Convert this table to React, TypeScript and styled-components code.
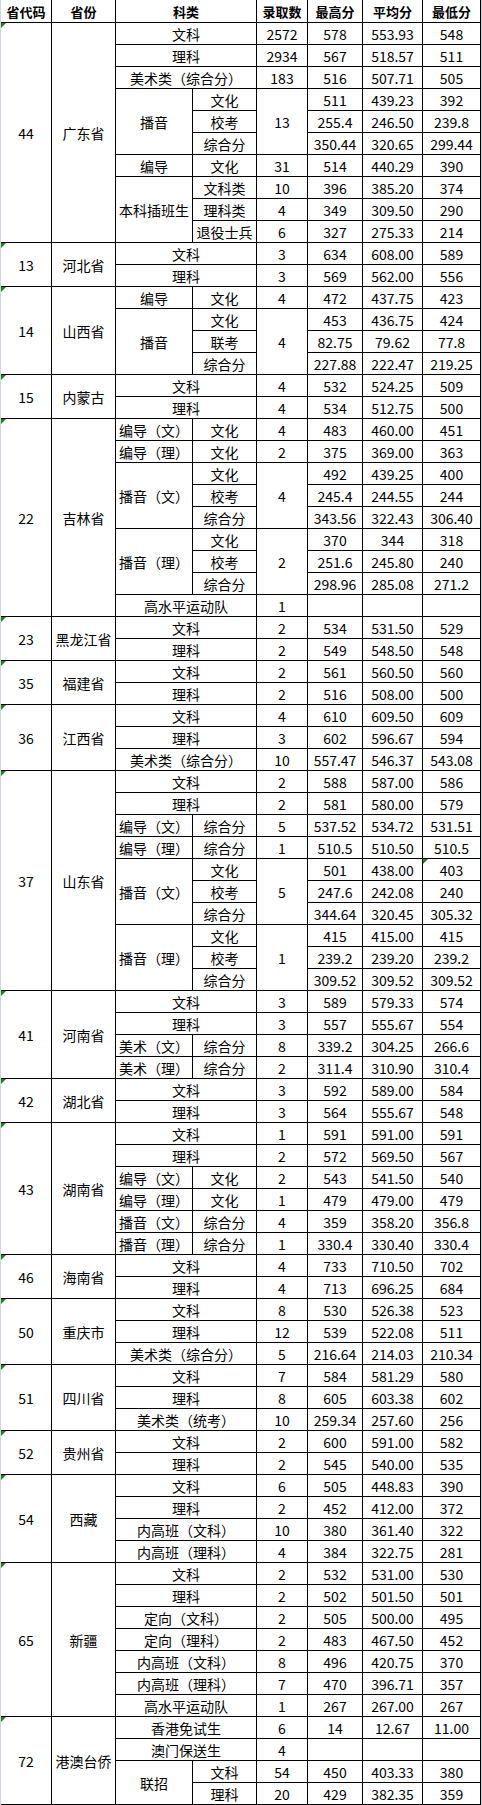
import * as React from 'react';
import styled, { createGlobalStyle } from 'styled-components';

const GlobalStyle = createGlobalStyle`
  html, body {
    margin: 0;
    padding: 0;
    background: #fff;
  }
  body {
    font-family: "Noto Sans CJK SC", "Noto Sans", sans-serif;
    color: #000;
  }
`;

type CellSpec = string | { t: string; cs?: number; rs?: number; flag?: boolean };

interface IProvince {
  code: string;
  name: string;
  rows: CellSpec[][];
}

// helpers for merged cells
const wide = (t: string): CellSpec => ({ t, cs: 2 });
const tall = (t: string, rs: number): CellSpec => ({ t, rs });

const provinces: IProvince[] = [
  {
    code: '44',
    name: '广东省',
    rows: [
      [wide('文科'), '2572', '578', '553.93', '548'],
      [wide('理科'), '2934', '567', '518.57', '511'],
      [wide('美术类（综合分）'), '183', '516', '507.71', '505'],
      [tall('播音', 3), '文化', tall('13', 3), '511', '439.23', '392'],
      ['校考', '255.4', '246.50', '239.8'],
      ['综合分', '350.44', '320.65', '299.44'],
      ['编导', '文化', '31', '514', '440.29', '390'],
      [tall('本科插班生', 3), '文科类', '10', '396', '385.20', '374'],
      ['理科类', '4', '349', '309.50', '290'],
      ['退役士兵', '6', '327', '275.33', '214'],
    ],
  },
  {
    code: '13',
    name: '河北省',
    rows: [
      [wide('文科'), '3', '634', '608.00', '589'],
      [wide('理科'), '3', '569', '562.00', '556'],
    ],
  },
  {
    code: '14',
    name: '山西省',
    rows: [
      ['编导', '文化', '4', '472', '437.75', '423'],
      [tall('播音', 3), '文化', tall('4', 3), '453', '436.75', '424'],
      ['联考', '82.75', '79.62', '77.8'],
      ['综合分', '227.88', '222.47', '219.25'],
    ],
  },
  {
    code: '15',
    name: '内蒙古',
    rows: [
      [wide('文科'), '4', '532', '524.25', '509'],
      [wide('理科'), '4', '534', '512.75', '500'],
    ],
  },
  {
    code: '22',
    name: '吉林省',
    rows: [
      ['编导（文）', '文化', '4', '483', '460.00', '451'],
      ['编导（理）', '文化', '2', '375', '369.00', '363'],
      [tall('播音（文）', 3), '文化', tall('4', 3), '492', '439.25', '400'],
      ['校考', '245.4', '244.55', '244'],
      ['综合分', '343.56', '322.43', '306.40'],
      [tall('播音（理）', 3), '文化', tall('2', 3), '370', '344', '318'],
      ['校考', '251.6', '245.80', '240'],
      ['综合分', '298.96', '285.08', '271.2'],
      [wide('高水平运动队'), '1', '', '', ''],
    ],
  },
  {
    code: '23',
    name: '黑龙江省',
    rows: [
      [wide('文科'), '2', '534', '531.50', '529'],
      [wide('理科'), '2', '549', '548.50', '548'],
    ],
  },
  {
    code: '35',
    name: '福建省',
    rows: [
      [wide('文科'), '2', '561', '560.50', '560'],
      [wide('理科'), '2', '516', '508.00', '500'],
    ],
  },
  {
    code: '36',
    name: '江西省',
    rows: [
      [wide('文科'), '4', '610', '609.50', '609'],
      [wide('理科'), '3', '602', '596.67', '594'],
      [wide('美术类（综合分）'), '10', '557.47', '546.37', '543.08'],
    ],
  },
  {
    code: '37',
    name: '山东省',
    rows: [
      [wide('文科'), '2', '588', '587.00', '586'],
      [wide('理科'), '2', '581', '580.00', '579'],
      ['编导（文）', '综合分', '5', '537.52', '534.72', '531.51'],
      ['编导（理）', '综合分', '1', '510.5', '510.50', '510.5'],
      [tall('播音（文）', 3), '文化', tall('5', 3), '501', '438.00', { t: '403', flag: true }],
      ['校考', '247.6', '242.08', '240'],
      ['综合分', '344.64', '320.45', '305.32'],
      [tall('播音（理）', 3), '文化', tall('1', 3), '415', '415.00', '415'],
      ['校考', '239.2', '239.20', '239.2'],
      ['综合分', '309.52', '309.52', '309.52'],
    ],
  },
  {
    code: '41',
    name: '河南省',
    rows: [
      [wide('文科'), '3', '589', '579.33', '574'],
      [wide('理科'), '3', '557', '555.67', '554'],
      ['美术（文）', '综合分', '8', '339.2', '304.25', '266.6'],
      ['美术（理）', '综合分', '2', '311.4', '310.90', '310.4'],
    ],
  },
  {
    code: '42',
    name: '湖北省',
    rows: [
      [wide('文科'), '3', '592', '589.00', '584'],
      [wide('理科'), '3', '564', '555.67', '548'],
    ],
  },
  {
    code: '43',
    name: '湖南省',
    rows: [
      [wide('文科'), '1', '591', '591.00', '591'],
      [wide('理科'), '2', '572', '569.50', '567'],
      ['编导（文）', '文化', '2', '543', '541.50', '540'],
      ['编导（理）', '文化', '1', '479', '479.00', '479'],
      ['播音（文）', '综合分', '4', '359', '358.20', '356.8'],
      ['播音（理）', '综合分', '1', '330.4', '330.40', '330.4'],
    ],
  },
  {
    code: '46',
    name: '海南省',
    rows: [
      [wide('文科'), '4', '733', '710.50', '702'],
      [wide('理科'), '4', '713', '696.25', '684'],
    ],
  },
  {
    code: '50',
    name: '重庆市',
    rows: [
      [wide('文科'), '8', '530', '526.38', '523'],
      [wide('理科'), '12', '539', '522.08', '511'],
      [wide('美术类（综合分）'), '5', '216.64', '214.03', '210.34'],
    ],
  },
  {
    code: '51',
    name: '四川省',
    rows: [
      [wide('文科'), '7', '584', '581.29', '580'],
      [wide('理科'), '8', '605', '603.38', '602'],
      [wide('美术类（统考）'), '10', '259.34', '257.60', '256'],
    ],
  },
  {
    code: '52',
    name: '贵州省',
    rows: [
      [wide('文科'), '2', '600', '591.00', '582'],
      [wide('理科'), '2', '545', '540.00', '535'],
    ],
  },
  {
    code: '54',
    name: '西藏',
    rows: [
      [wide('文科'), '6', '505', '448.83', '390'],
      [wide('理科'), '2', '452', '412.00', '372'],
      [wide('内高班（文科）'), '10', '380', '361.40', '322'],
      [wide('内高班（理科）'), '4', '384', '322.75', '281'],
    ],
  },
  {
    code: '65',
    name: '新疆',
    rows: [
      [wide('文科'), '2', '532', '531.00', '530'],
      [wide('理科'), '2', '502', '501.50', '501'],
      [wide('定向（文科）'), '2', '505', '500.00', '495'],
      [wide('定向（理科）'), '2', '483', '467.50', '452'],
      [wide('内高班（文科）'), '8', '496', '420.75', '370'],
      [wide('内高班（理科）'), '7', '470', '396.71', '357'],
      [wide('高水平运动队'), '1', '267', '267.00', '267'],
    ],
  },
  {
    code: '72',
    name: '港澳台侨',
    rows: [
      [wide('香港免试生'), '6', '14', '12.67', '11.00'],
      [wide('澳门保送生'), '4', '', '', ''],
      [tall('联招', 2), '文科', '54', '450', '403.33', '380'],
      ['理科', '20', '429', '382.35', '359'],
    ],
  },
];

const headers: CellSpec[] = ['省代码', '省份', wide('科类'), '录取数', '最高分', '平均分', '最低分'];

const Sheet = styled.div`
  display: grid;
  grid-template-columns: 50px 63px 76px 63px 50px 54px 59px 57px;
  grid-template-rows: 22px;
  grid-auto-rows: 21px;
  gap: 1px;
  width: fit-content;
  background: #000;
  border-left: 1px solid #cdd5e1;
  border-right: 1px solid #cdd5e1;
  padding: 0 1px 1px 0;
`;

const Cell = styled.div<{ $cs: number; $rs: number; $head?: boolean; $flag?: boolean }>`
  position: relative;
  grid-column: span ${(p) => p.$cs};
  grid-row: span ${(p) => p.$rs};
  display: flex;
  align-items: center;
  justify-content: center;
  background: #fff;
  font-size: ${(p) => (p.$head ? '13px' : '14px')};
  font-weight: ${(p) => (p.$head ? 700 : 400)};
  line-height: 1;
  white-space: nowrap;
  overflow: hidden;

  ${(p) =>
    p.$flag &&
    `
    &::before {
      content: '';
      position: absolute;
      top: 0;
      left: 0;
      border-top: 5px solid #1d7f1d;
      border-right: 5px solid transparent;
    }
  `}
`;

function renderCell(spec: CellSpec, key: string, head?: boolean) {
  const c = typeof spec === 'string' ? { t: spec } : spec;
  return (
    <Cell key={key} $cs={c.cs || 1} $rs={c.rs || 1} $head={head} $flag={c.flag}>
      {c.t}
    </Cell>
  );
}

export default function App() {
  return (
    <>
      <GlobalStyle />
      <Sheet>
        {headers.map((h, i) => renderCell(h, `h-${i}`, true))}
        {provinces.map((p) =>
          p.rows.map((row, ri) => (
            <React.Fragment key={`${p.code}-${ri}`}>
              {ri === 0 && (
                <>
                  <Cell $cs={1} $rs={p.rows.length} $flag>
                    {p.code}
                  </Cell>
                  <Cell $cs={1} $rs={p.rows.length}>
                    {p.name}
                  </Cell>
                </>
              )}
              {row.map((cell, ci) => renderCell(cell, `${p.code}-${ri}-${ci}`))}
            </React.Fragment>
          ))
        )}
      </Sheet>
    </>
  );
}
